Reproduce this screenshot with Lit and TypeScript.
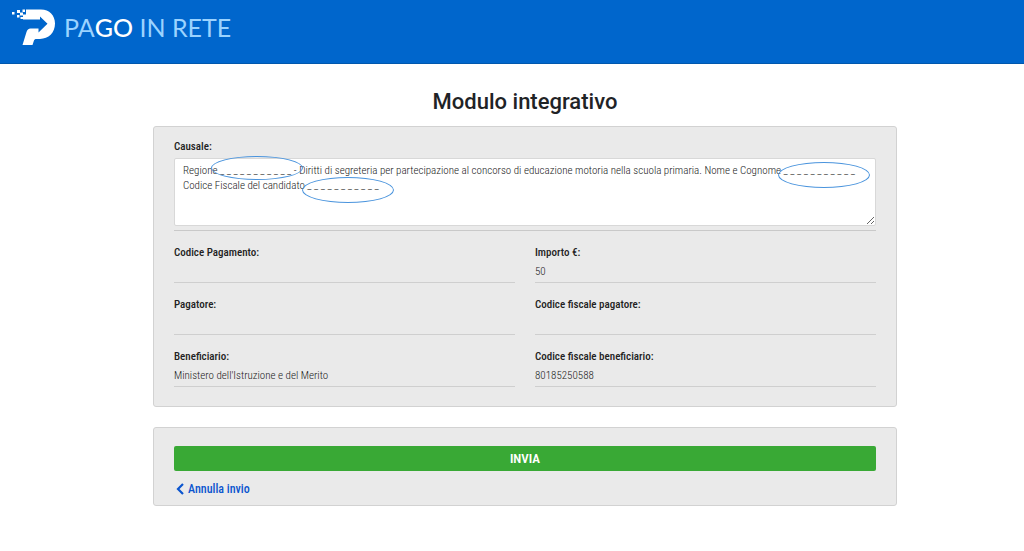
import { LitElement, html, css } from "lit";
import { customElement, property } from "lit/decorators.js";

const BLANK = "_ _ _ _ _ _ _ _ _ _ _";

@customElement("site-logo")
class SiteLogo extends LitElement {
  static styles = css`
    :host {
      display: block;
    }
    .logo {
      display: flex;
      align-items: flex-start;
      gap: 8px;
      color: #9bd3ff;
      font: 25px/36px Lato, sans-serif;
      text-decoration: none;
      white-space: nowrap;
    }
    .mark {
      flex: none;
      fill: #fff;
    }
    .strong {
      color: #fff;
      font-weight: 500;
    }
  `;

  render() {
    return html`
      <a class="logo" href="#" aria-label="Pago in Rete">
        <svg class="mark" width="44" height="38" viewBox="0 0 44 38" aria-hidden="true">
          <path d="M14 0.500H29C37.500 0.500 43 6.500 43 14.500C43 24 36.500 29.500 28 30H24.500C23 30 22.300 30.500 21.800 32L20.500 36H10.500L14.500 23C15.200 21 16.500 19.500 18.500 19.500H26.500V23.500L35.500 14.800L28 7.500V10.500H11V8H14Z" />
          <path d="M0 3h2.500v2.500H0zM5 1h3v3H5zM10.500 0.500h2.500v2.500h-2.500zM8 3.500h3v3H8zM5 6h2.500v2.500H5zM11 5.500h3v3h-3zM8.500 8h2.500v2H8.500z" />
        </svg>
        <span>PA<span class="strong">GO</span> IN RETE</span>
      </a>
    `;
  }
}

@customElement("data-field")
class DataField extends LitElement {
  @property() label = "";
  @property() value = "";

  static styles = css`
    :host {
      display: block;
    }
    .field {
      margin: 0;
      padding: 14px 0 2px;
      border-bottom: 1px solid #cfcfcf;
      font-size: 11px;
      line-height: 16px;
    }
    .label {
      color: #222;
      font-weight: 500;
    }
    .value {
      margin: 3px 0 0;
      min-height: 16px;
      color: #222;
      font-weight: 300;
    }
  `;

  render() {
    return html`
      <dl class="field">
        <dt class="label">${this.label}</dt>
        <dd class="value">${this.value}</dd>
      </dl>
    `;
  }
}

@customElement("app-root")
class AppRoot extends LitElement {
  static styles = css`
    :host {
      display: block;
      min-height: 100vh;
      background: #fff;
      font-family: "Roboto Condensed", Roboto, sans-serif;
    }
    * {
      box-sizing: border-box;
    }
    .header {
      height: 64px;
      padding: 9px 12px;
      background: #0066cc;
      border-bottom: 1px solid #0057ad;
    }
    .main {
      display: grid;
      gap: 9px;
      padding: 22px 127px 24px 153px;
    }
    .title {
      margin: 0;
      color: #1f2326;
      font-family: Roboto, sans-serif;
      font-size: 22px;
      font-weight: 500;
      line-height: 31px;
      text-align: center;
    }
    .panels {
      display: grid;
      gap: 20px;
    }
    .panel {
      padding: 12px 20px 19px;
      background: #eaeaea;
      border: 1px solid #d2d2d2;
      border-radius: 3px;
    }
    .reason {
      padding-bottom: 4px;
      border-bottom: 1px solid #c9c9c9;
    }
    .label {
      display: block;
      margin-bottom: 3px;
      color: #222;
      font-size: 11px;
      font-weight: 500;
      line-height: 16px;
    }
    .box {
      position: relative;
    }
    .text {
      display: block;
      width: 100%;
      height: 68px;
      padding: 4px 8px;
      border: 1px solid #d8d8d8;
      border-radius: 2px;
      background: #fff;
      color: #222;
      font: 300 11px/15px "Roboto Condensed", Roboto, sans-serif;
      resize: both;
      overflow: hidden;
      outline: none;
    }
    .ring {
      position: absolute;
      width: 92px;
      height: 26px;
      border: 1px solid #4a94dd;
      border-radius: 50%;
      pointer-events: none;
    }
    .region {
      left: 37px;
      top: -2px;
      height: 24px;
    }
    .name {
      left: 604px;
      top: 4px;
    }
    .code {
      left: 128px;
      top: 19px;
    }
    .fields {
      display: grid;
      grid-template-columns: 1fr 1fr;
      column-gap: 20px;
    }
    .actions {
      display: flex;
      flex-direction: column;
      align-items: flex-start;
      gap: 10px;
      padding: 18px 20px 8px;
    }
    .send {
      width: 100%;
      height: 25px;
      padding: 0;
      border: 0;
      border-radius: 2px;
      background: #39a935;
      color: #fff;
      font: 600 13px/25px "Roboto Condensed", Roboto, sans-serif;
    }
    .cancel {
      display: flex;
      align-items: center;
      gap: 4px;
      padding-left: 2px;
      color: #0b55cf;
      font-size: 12px;
      font-weight: 500;
      line-height: 16px;
      text-decoration: none;
    }
    .chevron {
      fill: none;
      stroke: currentColor;
      stroke-width: 2.2;
    }
  `;

  render() {
    const reason =
      `Regione ${BLANK} - Diritti di segreteria per partecipazione al concorso di educazione motoria nella scuola primaria. Nome e Cognome ${BLANK}\n` +
      `Codice Fiscale del candidato ${BLANK}`;
    return html`
      <header class="header"><site-logo></site-logo></header>
      <main class="main">
        <h1 class="title">Modulo integrativo</h1>
        <div class="panels">
          <section class="panel">
            <div class="reason">
              <label class="label" for="reason">Causale:</label>
              <div class="box">
                <textarea class="text" id="reason" spellcheck="false" .value=${reason}></textarea>
                <span class="ring region"></span>
                <span class="ring name"></span>
                <span class="ring code"></span>
              </div>
            </div>
            <div class="fields">
              <data-field label="Codice Pagamento:"></data-field>
              <data-field label="Importo €:" value="50"></data-field>
              <data-field label="Pagatore:"></data-field>
              <data-field label="Codice fiscale pagatore:"></data-field>
              <data-field label="Beneficiario:" value="Ministero dell'Istruzione e del Merito"></data-field>
              <data-field label="Codice fiscale beneficiario:" value="80185250588"></data-field>
            </div>
          </section>
          <section class="panel actions">
            <button class="send" type="button">INVIA</button>
            <a class="cancel" href="#">
              <svg class="chevron" width="8" height="12" viewBox="0 0 8 12" aria-hidden="true">
                <path d="M7 1L2 6l5 5" />
              </svg>
              Annulla invio
            </a>
          </section>
        </div>
      </main>
    `;
  }
}
